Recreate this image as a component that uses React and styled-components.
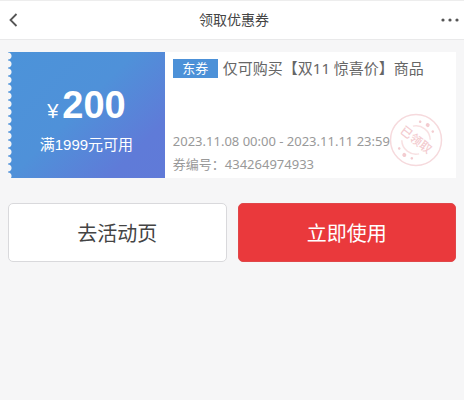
import React from 'react'
import styled, { createGlobalStyle } from 'styled-components';

const GlobalStyle = createGlobalStyle`
  * {
    box-sizing: border-box;
  }

  body {
    margin: 0;
    background-color: #f6f6f7;
    color: #444;
    font-family: "Noto Sans", "Noto Sans CJK SC", sans-serif;
  }
`;

const Header = styled.header`
  display: flex;
  align-items: center;
  justify-content: space-between;
  height: 40px;
  padding: 0 4px 0 8px;
  background-color: #fff;
  border-top: 1px solid #ededed;
  border-bottom: 1px solid #e9e9ea;
`;

const HeaderTitle = styled.h1`
  margin: 0;
  font-size: 14px;
  line-height: 20px;
  font-weight: 400;
`;

const IconButton = styled.button`
  display: flex;
  align-items: center;
  justify-content: ${({ $end }) => ($end ? 'flex-end' : 'flex-start')};
  width: 32px;
  height: 32px;
  padding: 0;
  border: 0;
  background: none;
  color: #555;
  cursor: pointer;
`;

const Main = styled.main`
  padding: 12px 8px;
`;

const Coupon = styled.section`
  position: relative;
  display: flex;
  height: 126px;
  background-color: #fff;
`;

const Amount = styled.div`
  display: flex;
  flex-direction: column;
  align-items: center;
  flex: 0 0 35%;
  padding-top: 33px;
  color: #fff;
  font-family: "Liberation Sans", "Noto Sans CJK SC", sans-serif;
  background:
    radial-gradient(circle at 0 4px, #f6f6f7 3px, transparent 4px) 0 0 / 4px 8px repeat-y,
    linear-gradient(135deg, #4c93d9 0%, #4f91d9 45%, #5f7bd8 80%, #607ad8 100%);
`;

const Price = styled.p`
  display: flex;
  align-items: baseline;
  gap: 4px;
  margin: 0;
  font-size: 38px;
  line-height: 40px;
  font-weight: 700;
`;

const Currency = styled.span`
  font-size: 20px;
  font-weight: 400;
`;

const Condition = styled.p`
  margin: 4px 0 0;
  font-size: 15px;
  line-height: 20px;
`;

const Detail = styled.div`
  display: flex;
  flex-direction: column;
  flex: 1;
  min-width: 0;
  padding: 6px 8px 2px;
`;

const CouponTitle = styled.h2`
  display: flex;
  align-items: center;
  gap: 5px;
  margin: 0;
  color: #666;
  font-size: 15px;
  line-height: 20px;
  font-weight: 400;
  white-space: nowrap;
`;

const Tag = styled.span`
  width: 45px;
  color: #fff;
  background-color: #4c91d8;
  font-size: 13px;
  line-height: 19px;
  font-weight: 400;
  text-align: center;
`;

const Meta = styled.div`
  margin-top: auto;
  color: #999;
  font-size: 13px;
  line-height: 23px;
  white-space: nowrap;

  p {
    margin: 0;
  }
`;

const Stamp = styled.svg`
  position: absolute;
  right: 12px;
  bottom: 11px;
  width: 54px;
  height: 54px;
  font-family: "Noto Sans CJK SC", sans-serif;
`;

const Actions = styled.div`
  display: grid;
  grid-template-columns: 1fr 1fr;
  gap: 11px;
  margin-top: 25px;
`;

const ActionButton = styled.button`
  height: 59px;
  padding: 0;
  border: ${({ $primary }) => ($primary ? '1px solid #e0474a' : '1px solid #d9d9dc')};
  border-radius: 5px;
  background-color: ${({ $primary }) => ($primary ? '#ea393c' : '#fff')};
  color: ${({ $primary }) => ($primary ? '#fff' : '#444')};
  font-family: inherit;
  font-size: 20px;
  cursor: pointer;
`;

const BackIcon = () => (
  <svg width="12" height="14" viewBox="0 0 12 14" fill="none" stroke="currentColor" strokeWidth="1.8">
    <path d="M8.5 1 2.5 7l6 6" />
  </svg>
)

const MoreIcon = () => (
  <svg width="20" height="4" viewBox="0 0 20 4" fill="currentColor">
    <circle cx="3" cy="2" r="1.6" />
    <circle cx="10" cy="2" r="1.6" />
    <circle cx="17" cy="2" r="1.6" />
  </svg>
)

const ReceivedStamp = () => (
  <Stamp viewBox="-26 -27 54 54" role="img" aria-label="已领取">
    <circle r="25.5" fill="none" stroke="#f6dadd" strokeWidth="1.5" />
    <g transform="rotate(38)" fill="#f3ccd0">
      <path d="M-11 -9A14.2 14.2 0 0 1 11 -9M-11 9A14.2 14.2 0 0 0 11 9" fill="none" stroke="#f8e0e2" strokeWidth="1.5" />
      <circle cx="-8" cy="-17" r="1.3" />
      <circle cx="0" cy="-19" r="2" />
      <circle cx="8" cy="-17" r="1.3" />
      <circle cx="-8" cy="17" r="1.3" />
      <circle cx="0" cy="19" r="2" />
      <circle cx="8" cy="17" r="1.3" />
      <text y="4" textAnchor="middle" fontSize="12" fontWeight="500">已领取</text>
    </g>
  </Stamp>
)

const App = () => {
  return (
    <>
      <GlobalStyle />
      <Header>
        <IconButton type="button" aria-label="返回">
          <BackIcon />
        </IconButton>
        <HeaderTitle>领取优惠券</HeaderTitle>
        <IconButton type="button" aria-label="更多" $end>
          <MoreIcon />
        </IconButton>
      </Header>
      <Main>
        <Coupon>
          <Amount>
            <Price><Currency>¥</Currency>200</Price>
            <Condition>满1999元可用</Condition>
          </Amount>
          <Detail>
            <CouponTitle>
              <Tag>东券</Tag>
              仅可购买【双11 惊喜价】商品
            </CouponTitle>
            <Meta>
              <p>2023.11.08 00:00 - 2023.11.11 23:59</p>
              <p>券编号：434264974933</p>
            </Meta>
          </Detail>
          <ReceivedStamp />
        </Coupon>
        <Actions>
          <ActionButton type="button">去活动页</ActionButton>
          <ActionButton type="button" $primary>立即使用</ActionButton>
        </Actions>
      </Main>
    </>
  )
}

export default App
